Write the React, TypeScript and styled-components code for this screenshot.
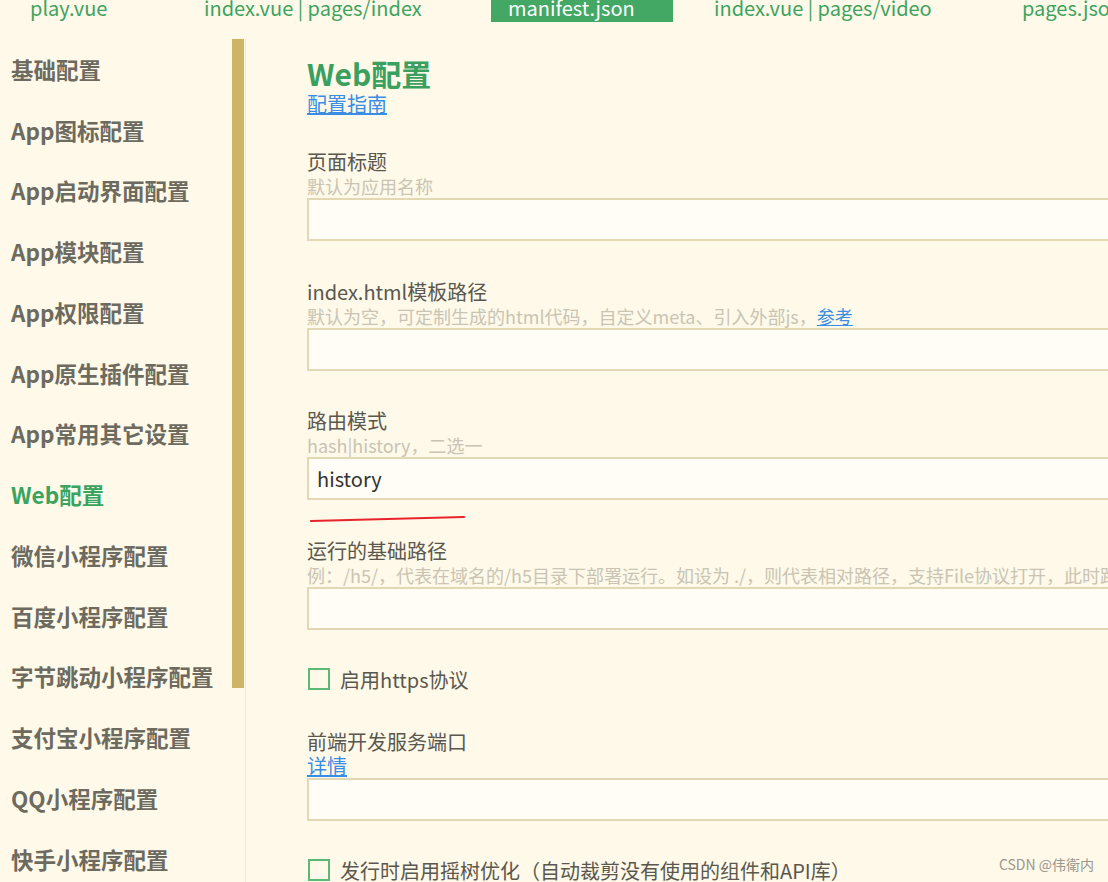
import React from "react";
import styled, { createGlobalStyle } from "styled-components";

const Global = createGlobalStyle`
  html, body { margin: 0; padding: 0; background: #fef9e8; overflow: hidden; }
  body { font-family: "Noto Sans CJK SC", "Noto Sans", sans-serif; }
  * { box-sizing: border-box; }
`;

const Page = styled.div`
  width: 1108px;
  height: 882px;
  display: flex;
  flex-direction: column;
  background: #fef9e8;
  position: relative;
  overflow: hidden;
`;

const TabBar = styled.div`
  height: 22px;
  margin-bottom: 17px;
  display: flex;
  overflow: hidden;
  flex-shrink: 0;
`;

const Tab = styled.div<{ $w: number; $active?: boolean }>`
  width: ${(p) => p.$w}px;
  flex-shrink: 0;
  height: 22px;
  padding-left: 17px;
  background: ${(p) => (p.$active ? "#42a864" : "transparent")};
  color: ${(p) => (p.$active ? "#ffffff" : "#3da35f")};
  font-size: 20px;
  line-height: 16px;
  white-space: nowrap;
`;

const TabGap = styled.div<{ $w: number }>`
  width: ${(p) => p.$w}px;
  flex-shrink: 0;
`;

const Body = styled.div`
  flex: 1;
  display: flex;
  min-height: 0;
`;

const Sidebar = styled.nav`
  width: 246px;
  flex-shrink: 0;
  border-right: 1px solid #f1e7cb;
  position: relative;
  display: flex;
  flex-direction: column;
`;

const ScrollThumb = styled.div`
  position: absolute;
  left: 232px;
  top: 0;
  width: 12px;
  height: 649px;
  background: #cdb467;
`;

const NavItem = styled.div<{ $active?: boolean }>`
  height: 60.75px;
  flex-shrink: 0;
  display: flex;
  align-items: center;
  padding-left: 11px;
  padding-bottom: 1px;
  font-size: 22.5px;
  font-weight: 700;
  color: ${(p) => (p.$active ? "#3aa35e" : "#6d6a60")};
  white-space: nowrap;
`;

const Main = styled.main`
  flex: 1;
  min-width: 0;
  padding: 16px 0 0 61px;
  overflow: hidden;
  white-space: nowrap;
  display: flex;
  flex-direction: column;
`;

const Title = styled.h1`
  margin: 0;
  font-size: 30px;
  line-height: 36px;
  font-weight: 700;
  color: #3b9f60;
`;

const Link = styled.a`
  color: #3a8de4;
  text-decoration: underline;
  font-size: 20px;
  line-height: 26px;
  cursor: pointer;
`;

const Fields = styled.div`
  margin-top: 32px;
  display: flex;
  flex-direction: column;
  gap: 37.5px;
`;

const Field = styled.div`
  display: flex;
  flex-direction: column;
  position: relative;
`;

const Label = styled.div`
  font-size: 20px;
  line-height: 25px;
  color: #5a574f;
`;

const Hint = styled.div`
  font-size: 18px;
  line-height: 24px;
  color: #c9c4b4;
`;

const InlineLink = styled.a`
  color: #3a8de4;
  text-decoration: underline;
`;

const SubLink = styled.a`
  color: #3a8de4;
  text-decoration: underline;
  font-size: 20px;
  line-height: 24px;
  align-self: flex-start;
`;

const Input = styled.div`
  width: 860px;
  height: 43px;
  border: 2px solid #e3d8b3;
  background: #fffdf5;
  padding-left: 8px;
  font-size: 20px;
  line-height: 39px;
  color: #333;
`;

const RedMark = styled.svg`
  position: absolute;
  left: 2px;
  top: 104px;
`;

const CheckRow = styled.label`
  display: flex;
  align-items: center;
  height: 24px;
  gap: 10px;
  font-size: 20px;
  color: #5a574f;
`;

const CheckBox = styled.span`
  width: 22px;
  height: 22px;
  margin-left: 1px;
  border: 2px solid #5cb875;
  background: transparent;
  flex-shrink: 0;
`;

const Watermark = styled.div`
  position: absolute;
  right: 14px;
  bottom: 8px;
  font-size: 14px;
  color: #9a978f;
  font-family: "Noto Sans CJK SC", sans-serif;
`;

const navItems = [
  "基础配置",
  "App图标配置",
  "App启动界面配置",
  "App模块配置",
  "App权限配置",
  "App原生插件配置",
  "App常用其它设置",
  "Web配置",
  "微信小程序配置",
  "百度小程序配置",
  "字节跳动小程序配置",
  "支付宝小程序配置",
  "QQ小程序配置",
  "快手小程序配置",
];

export default function App() {
  return (
    <Page>
      <Global />
      <TabBar>
        <TabGap $w={13} />
        <Tab $w={174}>play.vue</Tab>
        <Tab $w={304}>index.vue | pages/index</Tab>
        <Tab $w={182} $active>manifest.json</Tab>
        <TabGap $w={24} />
        <Tab $w={308}>index.vue | pages/video</Tab>
        <Tab $w={200}>pages.json</Tab>
      </TabBar>
      <Body>
        <Sidebar>
          <ScrollThumb />
          {navItems.map((n) => (
            <NavItem key={n} $active={n === "Web配置"}>
              {n}
            </NavItem>
          ))}
        </Sidebar>
        <Main>
          <Title>Web配置</Title>
          <div>
            <Link>配置指南</Link>
          </div>
          <Fields>
            <Field>
              <Label>页面标题</Label>
              <Hint>默认为应用名称</Hint>
              <Input />
            </Field>
            <Field>
              <Label>index.html模板路径</Label>
              <Hint>
                默认为空，可定制生成的html代码，自定义meta、引入外部js，
                <InlineLink>参考</InlineLink>
              </Hint>
              <Input />
            </Field>
            <Field>
              <Label>路由模式</Label>
              <Hint>hash|history，二选一</Hint>
              <Input>history</Input>
              <RedMark width="160" height="12" viewBox="0 0 160 12">
                <path d="M2 9 L155 5" stroke="#e8232b" strokeWidth="2.2" strokeLinecap="round" fill="none" />
              </RedMark>
            </Field>
            <Field>
              <Label>运行的基础路径</Label>
              <Hint>
                例：/h5/，代表在域名的/h5目录下部署运行。如设为 ./，则代表相对路径，支持File协议打开，此时路由模式强制为hash模式
              </Hint>
              <Input />
            </Field>
            <CheckRow>
              <CheckBox />
              启用https协议
            </CheckRow>
            <Field>
              <Label>前端开发服务端口</Label>
              <SubLink>详情</SubLink>
              <Input />
            </Field>
            <CheckRow>
              <CheckBox />
              发行时启用摇树优化（自动裁剪没有使用的组件和API库）
            </CheckRow>
          </Fields>
        </Main>
      </Body>
      <Watermark>CSDN @伟衛内</Watermark>
    </Page>
  );
}
